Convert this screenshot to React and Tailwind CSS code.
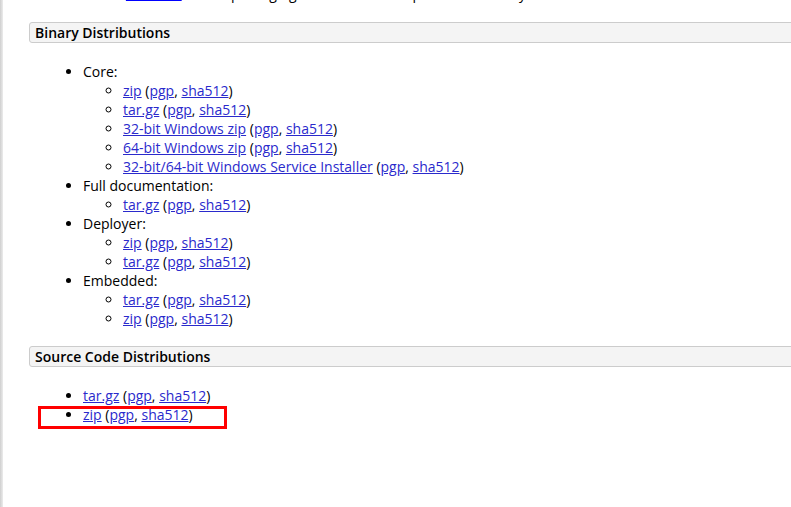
import React from "react";

const L = ({ children }) => (
  <a href="#" className="text-[#2a2acc] underline">{children}</a>
);

const Sig = () => (
  <>
    {" "}(<L>pgp</L>, <L>sha512</L>)
  </>
);

const Item = ({ name }) => (
  <li>
    <L>{name}</L>
    <Sig />
  </li>
);

export default function App() {
  return (
    <div
      className="relative w-[791px] h-[507px] overflow-hidden bg-white text-black flex"
      style={{ fontFamily: '"Open Sans", "Noto Sans", sans-serif' }}
    >
      <div className="w-[3px] shrink-0 bg-gradient-to-r from-[#cfcfcf] to-[#ececec]" />
      <div className="flex-1 pl-[26px] text-[14px] leading-[19px]">
        <p className="-mt-[16px] whitespace-nowrap">
          Please see the <a href="#" className="text-[#0000ff] underline">README</a> file for packaging information. It explains what every distribution contains.
        </p>
        <div className="mt-[19px] -mr-[20px] h-[21px] border border-[#cccccc] rounded-l-[3px] bg-[#f4f4f4] pl-[5px] font-semibold leading-[19px]">
          Binary Distributions
        </div>
        <ul className="list-disc pl-[54px] mt-[19px]">
          <li>
            Core:
            <ul className="list-[circle] pl-10">
              <Item name="zip" />
              <Item name="tar.gz" />
              <Item name="32-bit Windows zip" />
              <Item name="64-bit Windows zip" />
              <Item name="32-bit/64-bit Windows Service Installer" />
            </ul>
          </li>
          <li>
            Full documentation:
            <ul className="list-[circle] pl-10">
              <Item name="tar.gz" />
            </ul>
          </li>
          <li>
            Deployer:
            <ul className="list-[circle] pl-10">
              <Item name="zip" />
              <Item name="tar.gz" />
            </ul>
          </li>
          <li>
            Embedded:
            <ul className="list-[circle] pl-10">
              <Item name="tar.gz" />
              <Item name="zip" />
            </ul>
          </li>
        </ul>
        <div className="mt-[18px] -mr-[20px] h-[21px] border border-[#cccccc] rounded-l-[3px] bg-[#f4f4f4] pl-[5px] font-semibold leading-[19px]">
          Source Code Distributions
        </div>
        <ul className="list-disc pl-[54px] mt-[19px]">
          <Item name="tar.gz" />
          <Item name="zip" />
        </ul>
      </div>
      <div className="absolute left-[38px] top-[406px] w-[189px] h-[23px] border-[3px] border-[#ff0000]" />
    </div>
  );
}
